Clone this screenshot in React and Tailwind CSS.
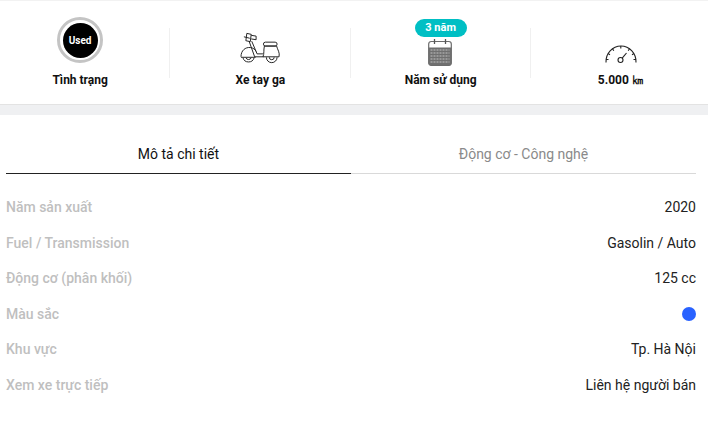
import React from 'react';

const specs = [
  { label: 'Năm sản xuất', value: '2020' },
  { label: 'Fuel / Transmission', value: 'Gasolin / Auto' },
  { label: 'Động cơ (phân khối)', value: '125 cc' },
  { label: 'Màu sắc', color: true },
  { label: 'Khu vực', value: 'Tp. Hà Nội' },
  { label: 'Xem xe trực tiếp', value: 'Liên hệ người bán' },
];

const ScooterIcon = () => (
  <svg width="41" height="33" viewBox="0 1 42 33" fill="none" stroke="#222" strokeWidth="1" className="block">
    {/* handlebar */}
    <path d="M4 5.500l6 1.500M7 2l-1 7.500 4.500 1 1-7.500z" />
    <path d="M11.500 4l5 .8v3.700l-5-.8" />
    {/* front column */}
    <path d="M9.500 10.500l5.500 15.500h9" />
    <path d="M12 10l5.500 13h6" />
    {/* front fender and wheel */}
    <path d="M1 26c0-6.500 4.500-10 9.500-9.500 3 .3 5 2 6 4" />
    <path d="M1 26.500h15" />
    <path d="M3 27a6 6 0 0 0 11.500 0" />
    <path d="M6 27a3 3 0 0 0 5.500 0" />
    {/* seat and body */}
    <rect x="24" y="11" width="14" height="4" rx="2" />
    <path d="M23.500 26c1.500-3 .5-7 1.500-11h12.500c1 4 3.500 6.500 2.500 11z" />
    {/* rear wheel */}
    <path d="M27 26.500a5.500 5.500 0 0 0 11 0" />
    <path d="M30 26.500a2.500 2.500 0 0 0 5 0" />
  </svg>
);

const CalendarIcon = () => (
  <svg width="24" height="28" viewBox="0 0 24 28" className="block">
    <rect x="0.700" y="3.500" width="22.600" height="23.800" rx="2.500" fill="#fff" stroke="#6b6b6b" strokeWidth="1.200" />
    <path d="M0.500 9.500h23v15.500a2.500 2.500 0 0 1-2.500 2.500h-18a2.500 2.500 0 0 1-2.500-2.500z" fill="#6f6f6f" />
    <path d="M6.500 1v5M17.500 1v5" stroke="#555" strokeWidth="1.300" />
    <path d="M2.500 12h19M2.500 15h19M2.500 18h19M2.500 21h19M2.500 24h19" stroke="#c4c4c4" strokeWidth="1.100" strokeDasharray="2 1" />
  </svg>
);

const GaugeIcon = () => (
  <svg width="32" height="20" viewBox="0 0 32 20" fill="none" stroke="#222" strokeWidth="1.100" className="block">
    <path d="M1 18.500c-.5-9 6.500-16.500 15-16.500s15.500 7.500 15 16.500" />
    <path d="M1 15.500h2.500M3 9.500l2 1.200M7.500 4.800l1.300 2M15.800 2v2.500M24.500 4.800l-1.300 2M29 9.500l-2 1.200M31 15.500h-2.500" />
    <circle cx="15.500" cy="16" r="2.500" />
    <path d="M17.200 14.200l4.300-5.200" />
  </svg>
);

const Stat = ({ label, divider, badge, children }) => (
  <div className="relative flex w-1/4 flex-col items-center">
    {divider && <span className="absolute top-[11px] right-0 h-[50px] w-px bg-[#f0f0f0]" />}
    <div className="flex h-[47px] items-end justify-center">{children}</div>
    {badge && (
      <span className="absolute top-[2px] left-1/2 w-[52px] -translate-x-1/2 rounded-full bg-[#00bfc4] text-center text-[11px] leading-[18px] font-bold whitespace-nowrap text-white">
        {badge}
      </span>
    )}
    <span className="mt-[8px] text-xs leading-[16px] font-bold text-[#111]">{label}</span>
  </div>
);

export default function App() {
  return (
    <div className="h-[423px] w-[708px] overflow-hidden bg-white font-['Roboto',sans-serif]">
      <div className="h-[105px] border-t border-b border-t-[#f2f2f2] border-b-[#e3e3e3] pt-[16px]">
        <div className="-ml-[10px] flex w-[721px]">
          <Stat label="Tình trạng" divider>
            <div className="mb-[1px] flex h-[46px] w-[46px] items-center justify-center rounded-full border-[3px] border-[#c4c4c4] bg-white">
              <div className="flex h-[35px] w-[35px] items-center justify-center rounded-full bg-black text-[10px] font-bold text-white">
                Used
              </div>
            </div>
          </Stat>
          <Stat label="Xe tay ga" divider>
            <div className="mb-[-1px] ml-[1px]">
              <ScooterIcon />
            </div>
          </Stat>
          <Stat label="Năm sử dụng" divider badge="3 năm">
            <div className="mr-[1px] mb-[-2px]">
              <CalendarIcon />
            </div>
          </Stat>
          <Stat label="5.000 ㎞">
            <GaugeIcon />
          </Stat>
        </div>
      </div>
      <div className="h-[10px] bg-[#eff0f2]" />

      <div className="px-[6px] pr-[12px]">
        <div className="flex h-[59px]">
          <div className="flex w-1/2 items-center justify-center border-b border-[#222] pt-[20px] text-sm text-[#111]">
            Mô tả chi tiết
          </div>
          <div className="flex w-1/2 items-center justify-center border-b border-[#d9d9d9] pt-[20px] text-sm text-[#8a8a8a]">
            Động cơ - Công nghệ
          </div>
        </div>
        <div className="mt-[15.4px]">
          {specs.map((s) => (
            <div key={s.label} className="flex h-[35.5px] items-center justify-between text-sm">
              <span className="font-medium text-[#bfbfbf]">{s.label}</span>
              {s.color ? (
                <span className="h-[14px] w-[14px] rounded-full bg-[#2962ff]" />
              ) : (
                <span className="text-[#222]">{s.value}</span>
              )}
            </div>
          ))}
        </div>
      </div>
    </div>
  );
}
